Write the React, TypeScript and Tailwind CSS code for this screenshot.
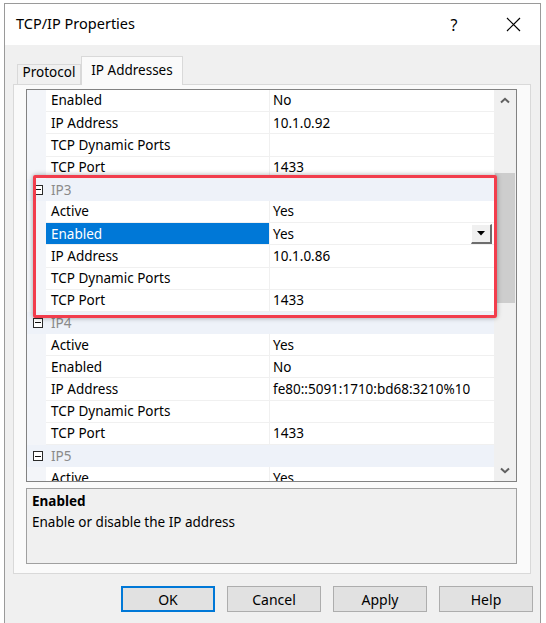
import React from "react";

type Row =
  | { kind: "prop"; label: string; value: string; selected?: boolean }
  | { kind: "cat"; label: string };

const rows: Row[] = [
  { kind: "prop", label: "Enabled", value: "No" },
  { kind: "prop", label: "IP Address", value: "10.1.0.92" },
  { kind: "prop", label: "TCP Dynamic Ports", value: "" },
  { kind: "prop", label: "TCP Port", value: "1433" },
  { kind: "cat", label: "IP3" },
  { kind: "prop", label: "Active", value: "Yes" },
  { kind: "prop", label: "Enabled", value: "Yes", selected: true },
  { kind: "prop", label: "IP Address", value: "10.1.0.86" },
  { kind: "prop", label: "TCP Dynamic Ports", value: "" },
  { kind: "prop", label: "TCP Port", value: "1433" },
  { kind: "cat", label: "IP4" },
  { kind: "prop", label: "Active", value: "Yes" },
  { kind: "prop", label: "Enabled", value: "No" },
  { kind: "prop", label: "IP Address", value: "fe80::5091:1710:bd68:3210%10" },
  { kind: "prop", label: "TCP Dynamic Ports", value: "" },
  { kind: "prop", label: "TCP Port", value: "1433" },
  { kind: "cat", label: "IP5" },
  { kind: "prop", label: "Active", value: "Yes" },
];

function MinusBox() {
  return (
    <span className="relative block h-[10px] w-[10px] border border-[#2a2a2a] bg-white">
      <span className="absolute left-[1px] top-[3.5px] h-px w-[6px] bg-[#111]" />
    </span>
  );
}

function Chevron({ up }: { up?: boolean }) {
  return (
    <svg width="10" height="7" viewBox="0 0 10 7" className={up ? "" : "rotate-180"}>
      <path d="M1 5.5 L5 1.8 L9 5.5" fill="none" stroke="#606060" strokeWidth="2" />
    </svg>
  );
}

function GridRow({ row }: { row: Row }) {
  if (row.kind === "cat") {
    return (
      <div className="flex h-[22.2px] flex-shrink-0 bg-[#eef2f9]">
        <div className="flex w-[19px] items-center justify-center pl-[2px]">
          <MinusBox />
        </div>
        <div className="flex flex-1 items-center pl-[5px] text-[#8a8a8a]">{row.label}</div>
      </div>
    );
  }
  return (
    <div className="flex h-[22.2px] flex-shrink-0">
      <div className="w-[19px] bg-[#f3f5f9]" />
      <div
        className={
          row.selected
            ? "flex w-[224px] items-center border-b border-r border-[#f0f0f0] bg-[#0078d7] pl-[5px] text-white"
            : "flex w-[224px] items-center border-b border-r border-[#f0f0f0] bg-white pl-[5px]"
        }
      >
        {row.label}
      </div>
      <div className="flex flex-1 items-center justify-between border-b border-[#f0f0f0] bg-white pl-[3px] pr-[2px]">
        <span>{row.value}</span>
        {row.selected && (
          <span className="flex h-[20px] w-[21px] items-center justify-center border-b-2 border-r-2 border-b-[#6d6d6d] border-r-[#6d6d6d] border-l border-t border-l-white border-t-white bg-[#f0f0f0]">
            <svg width="8" height="5" viewBox="0 0 8 5">
              <path d="M0 0 H8 L4 4.5 Z" fill="#000" />
            </svg>
          </span>
        )}
      </div>
    </div>
  );
}

export default function App() {
  return (
    <div className="h-[623px] w-[546px] overflow-hidden bg-white pl-[4px] pt-[3px] font-['Noto_Sans','Segoe_UI',sans-serif] text-[13.5px] text-black">
      <div className="h-[640px] w-[537px] border border-[#9a9a9a] bg-[#f0f0f0]">
        {/* Title bar */}
        <div className="flex h-[41px] items-center bg-white pl-[11px] text-[14.5px]">
          <span className="flex-1 pb-[1px]">TCP/IP Properties</span>
          <span className="w-[20px] text-center text-[16px]">?</span>
          <span className="ml-[40px] mr-[18px] flex w-[18px] justify-center">
            <svg width="15" height="15" viewBox="0 0 15 15">
              <path d="M1 1 L14 14 M14 1 L1 14" stroke="#000" strokeWidth="1.2" />
            </svg>
          </span>
        </div>

        {/* Body */}
        <div className="pl-[8px] pt-[11px]">
          {/* Tabs */}
          <div className="flex h-[28px] items-end pl-[4px]">
            <div className="flex h-[20px] w-[64px] items-center justify-center border border-b-0 border-[#d9d9d9] bg-[#f0f0f0] pb-[4px]">
              Protocol
            </div>
            <div className="relative z-10 -mb-px flex h-[29px] w-[102px] items-start justify-center border border-b-0 border-[#d9d9d9] bg-[#fafafa] pt-[3px]">
              IP Addresses
            </div>
          </div>

          {/* Tab page */}
          <div className="h-[490px] w-[518px] border border-[#d9d9d9] bg-[#fafafa] pl-[12px] pt-[4px]">
            {/* Property grid */}
            <div className="relative flex h-[393px] w-[491px] border border-[#828282] bg-white">
              <div className="flex w-[467px] flex-col overflow-hidden">
                {rows.map((row, i) => (
                  <GridRow key={i} row={row} />
                ))}
              </div>
              <div className="flex w-[22px] flex-col bg-[#f0f0f0]">
                <div className="flex h-[21px] items-center justify-center">
                  <Chevron up />
                </div>
                <div className="flex-1">
                  <div className="mx-[1px] mt-[62px] h-[130px] bg-[#cdcdcd]" />
                </div>
                <div className="flex h-[21px] items-center justify-center">
                  <Chevron />
                </div>
              </div>

              {/* Highlight */}
              <div className="absolute left-[6px] top-[85px] h-[143px] w-[464px] rounded-[2px] border-[3px] border-[#f23d4c] shadow-[0_0_5px_rgba(0,0,0,0.35)]" />
            </div>

            {/* Description */}
            <div className="mt-[6px] h-[76px] w-[491px] border border-[#a0a0a0] bg-[#f0f0f0] px-[5px] pt-[2px] leading-[21px]">
              <div className="font-bold">Enabled</div>
              <div>Enable or disable the IP address</div>
            </div>
          </div>

          {/* Buttons */}
          <div className="mt-[12px] flex justify-end gap-[12px] pr-[7px] text-[14px]">
            <button className="h-[26px] w-[94px] border-2 border-[#0078d7] bg-[#e1e1e1]">OK</button>
            <button className="h-[26px] w-[94px] border border-[#adadad] bg-[#e1e1e1]">Cancel</button>
            <button className="h-[26px] w-[94px] border border-[#adadad] bg-[#e1e1e1]">Apply</button>
            <button className="h-[26px] w-[94px] border border-[#adadad] bg-[#e1e1e1]">Help</button>
          </div>
        </div>
      </div>
    </div>
  );
}
